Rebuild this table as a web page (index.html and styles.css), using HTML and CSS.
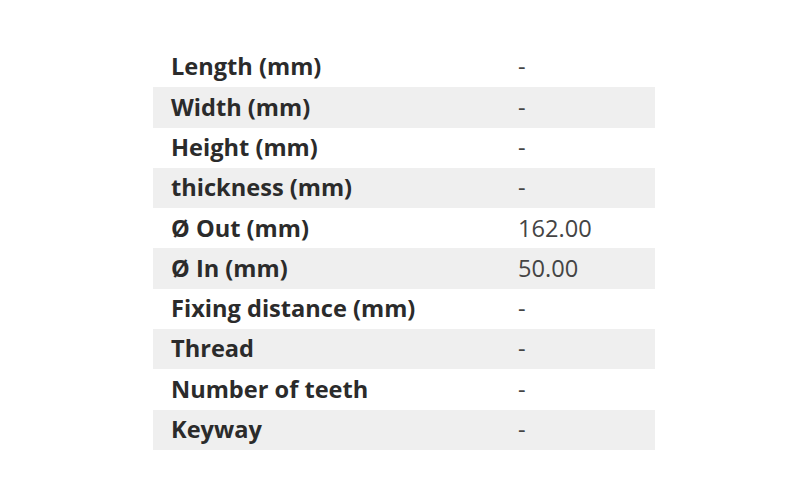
FILE: index.html
```html
<!DOCTYPE html>
<html>
<head>
<meta charset="utf-8">
<link rel="stylesheet" href="styles.css">
</head>
<body>
<div class="page">
<table class="specs">
<tbody>
<tr><th>Length (mm)</th><td>-</td></tr>
<tr><th>Width (mm)</th><td>-</td></tr>
<tr><th>Height (mm)</th><td>-</td></tr>
<tr><th>thickness (mm)</th><td>-</td></tr>
<tr><th>Ø Out (mm)</th><td>162.00</td></tr>
<tr><th>Ø In (mm)</th><td>50.00</td></tr>
<tr><th>Fixing distance (mm)</th><td>-</td></tr>
<tr><th>Thread</th><td>-</td></tr>
<tr><th>Number of teeth</th><td>-</td></tr>
<tr><th>Keyway</th><td>-</td></tr>
</tbody>
</table>
</div>
</body>
</html>
```
FILE: styles.css
```css
html, body {
  margin: 0;
  padding: 0;
  background: #ffffff;
}
.page {
  padding: 47px 0 0 153px;
}
.specs {
  width: 502px;
  border-collapse: collapse;
  font-family: "Open Sans", sans-serif;
  font-size: 23.6px;
  color: #333333;
}
.specs tr {
  height: 40.3px;
}
.specs tr:nth-child(even) {
  background: #efefef;
}
.specs th {
  text-align: left;
  font-weight: 700;
  padding: 0 0 0 18px;
  width: 347px;
  color: #2b2b2b;
  line-height: 1;
}
.specs td {
  padding: 0;
  font-weight: 400;
  color: #444444;
  line-height: 1;
}
```
